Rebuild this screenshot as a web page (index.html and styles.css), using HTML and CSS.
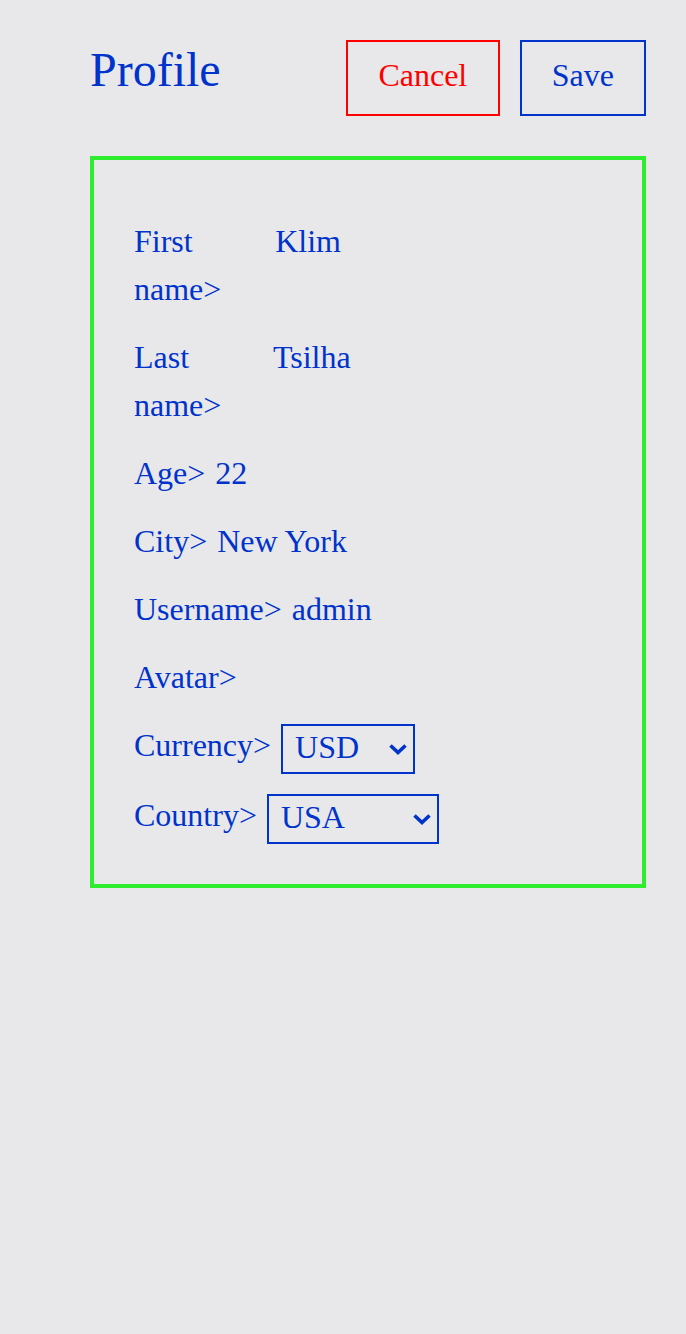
FILE: index.html
```html
<!DOCTYPE html>
<html lang="en">
<head>
<meta charset="utf-8">
<title>Profile</title>
<link rel="stylesheet" href="styles.css">
</head>
<body>
<div class="page">
  <header class="header">
    <h1 class="title">Profile</h1>
    <div class="actions">
      <button class="btn btn-cancel" type="button">Cancel</button>
      <button class="btn btn-save" type="button">Save</button>
    </div>
  </header>
  <section class="card">
    <div class="row"><span class="label">First name&gt;</span><span class="value">Klim</span></div>
    <div class="row"><span class="label">Last name&gt;</span><span class="value">Tsilha</span></div>
    <div class="row"><span class="label">Age&gt;</span><span class="value">22</span></div>
    <div class="row"><span class="label">City&gt;</span><span class="value">New York</span></div>
    <div class="row"><span class="label">Username&gt;</span><span class="value">admin</span></div>
    <div class="row"><span class="label">Avatar&gt;</span></div>
    <div class="row">
      <span class="label">Currency&gt;</span>
      <span class="select-wrap">
        <select class="select select-currency">
          <option>USD</option>
          <option>EUR</option>
          <option>RUB</option>
        </select>
        <svg class="chevron" width="20" height="12" viewBox="0 0 20 12" aria-hidden="true"><polyline points="2.5,2.5 10,9.5 17.5,2.5" fill="none" stroke="#0033cc" stroke-width="3.6"/></svg>
      </span>
    </div>
    <div class="row">
      <span class="label">Country&gt;</span>
      <span class="select-wrap">
        <select class="select select-country">
          <option>USA</option>
          <option>Russia</option>
          <option>Ukraine</option>
        </select>
        <svg class="chevron" width="20" height="12" viewBox="0 0 20 12" aria-hidden="true"><polyline points="2.5,2.5 10,9.5 17.5,2.5" fill="none" stroke="#0033cc" stroke-width="3.6"/></svg>
      </span>
    </div>
  </section>
</div>
</body>
</html>
```

FILE: styles.css
```css
html, body {
  margin: 0;
  padding: 0;
  background: #e8e8ea;
}

body {
  font-family: "Liberation Serif", "Times New Roman", serif;
  color: #0033cc;
}

.page {
  padding: 40px 40px 40px 90px;
}

.header {
  display: flex;
  align-items: baseline;
  justify-content: space-between;
}

.title {
  margin: 0;
  font-size: 48px;
  font-weight: normal;
  line-height: normal;
}

.actions {
  display: flex;
  gap: 20px;
}

.btn {
  box-sizing: border-box;
  height: 76px;
  padding: 0 30px 5px;
  background: transparent;
  font-family: "Liberation Serif", "Times New Roman", serif;
  font-size: 32px;
  line-height: normal;
  cursor: pointer;
}

.btn-cancel {
  min-width: 154px;
  color: #ff0000;
  border: 2px solid #ff0000;
}

.btn-save {
  color: #0033cc;
  border: 2px solid #0033cc;
}

.card {
  margin-top: 40px;
  border: 4px solid #2eec2e;
  padding: 37px 40px 43px;
}

.row {
  display: flex;
  align-items: flex-start;
  gap: 10px;
  margin-top: 20px;
  font-size: 32px;
  line-height: 48px;
}

.label {
  flex: 0 1 auto;
}

.value {
  flex: 0 1 384px;
}

.select-wrap {
  position: relative;
  display: flex;
  margin: 3px 0 -3px;
}

.select {
  box-sizing: border-box;
  height: 50px;
  margin: 0;
  border: 2px solid #0033cc;
  border-radius: 0;
  background: transparent;
  color: #0033cc;
  font-family: "Liberation Serif", "Times New Roman", serif;
  font-size: 32px;
  line-height: normal;
  padding: 0 0 4px 12px;
  -webkit-appearance: none;
  appearance: none;
}

.select-currency {
  width: 134px;
}

.select-country {
  width: 172px;
}

.chevron {
  position: absolute;
  right: 7px;
  top: 19px;
  pointer-events: none;
}
```
